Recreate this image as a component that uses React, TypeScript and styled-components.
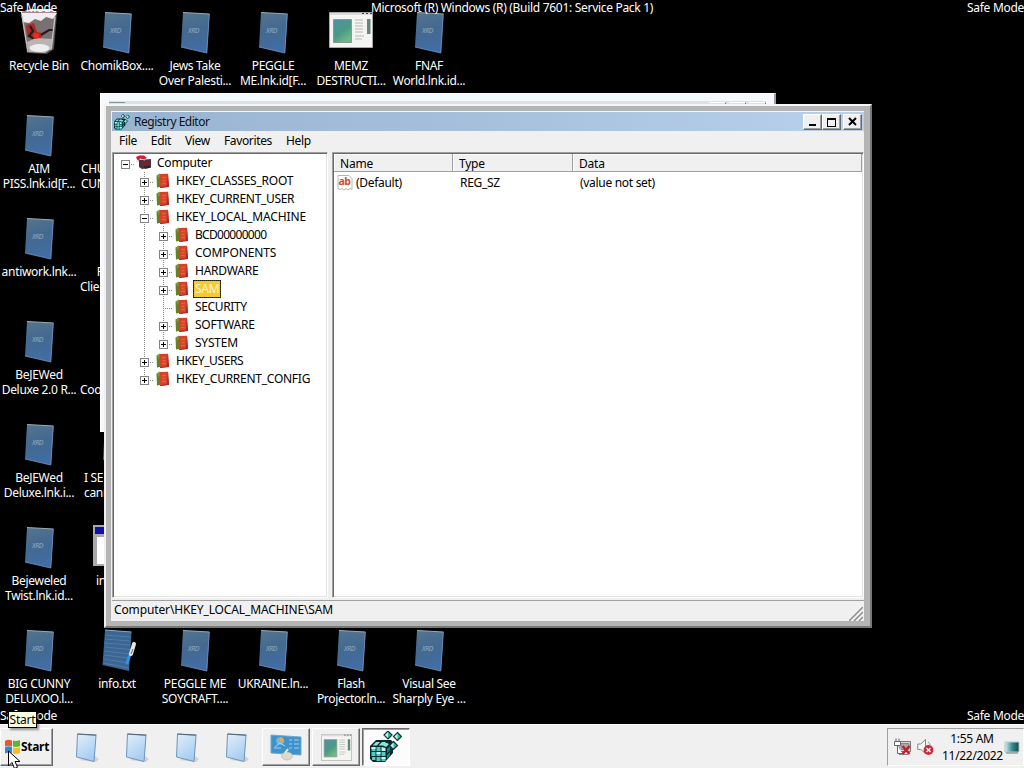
import React from 'react';
import styled, { createGlobalStyle, css } from 'styled-components';

const GlobalStyle = createGlobalStyle`
  * {
    box-sizing: border-box;
  }

  body {
    margin: 0;
    overflow: hidden;
    background: #000;
    font-family: "Noto Sans", "Open Sans", sans-serif;
    font-size: 12px;
    letter-spacing: -0.22px;
    color: #000;
    cursor: default;
  }

  svg {
    display: block;
    flex-shrink: 0;
  }
`;

const Screen = styled.div`
  position: relative;
  display: flex;
  flex-direction: column;
  width: 1024px;
  height: 768px;
  overflow: hidden;
`;

const Desktop = styled.main`
  flex: 1;
  min-height: 0;
  padding-top: 9px;
  background: #000;
`;

const IconGrid = styled.div`
  display: grid;
  grid-template-columns: repeat(6, 78px);
  grid-template-rows: repeat(7, 103px);
`;

const Shortcut = styled.div<{ col: number; row: number }>`
  grid-column: ${props => props.col};
  grid-row: ${props => props.row};
  display: flex;
  flex-direction: column;
  align-items: center;
  color: #fff;
`;

const IconBox = styled.div`
  display: flex;
  align-items: flex-start;
  justify-content: center;
  width: 48px;
  height: 48px;
`;

const ShortcutLabel = styled.div<{ indent?: number }>`
  width: 100%;
  margin-top: 1px;
  line-height: 15px;
  letter-spacing: -0.31px;
  text-align: center;
  white-space: pre;
  text-shadow: 0 1px 2px #000;
  ${props => props.indent !== undefined && css`
    padding-left: ${props.indent}px;
    text-align: left;
  `}
`;

const Watermark = styled.div<{ top: number }>`
  position: absolute;
  top: ${props => props.top}px;
  left: 0;
  display: flex;
  justify-content: space-between;
  width: 1024px;
  line-height: 16px;
  letter-spacing: -0.3px;
  color: #fff;
`;

const BackWindow = styled.div`
  position: absolute;
  top: 93px;
  left: 100px;
  width: 676px;
  height: 339px;
  padding: 7px 8px;
  background: #f5f8fc;
  border: 1px solid #fff;
  border-right: 2px solid #a0a0a0;
`;

const BackCaption = styled.div`
  display: flex;
  align-items: flex-start;
  justify-content: flex-end;
  gap: 3px;
  height: 14px;
  padding-top: 1px;
  background: #d9e2ea;
`;

const BackIcon = styled.i`
  width: 16px;
  height: 4px;
  margin-right: auto;
  border-top: 1px solid #8a949c;
`;

const BackButton = styled.i`
  width: 17px;
  height: 5px;
  border-top: 1px solid #fff;
  border-right: 1px solid #777;
`;

const Window = styled.section`
  position: absolute;
  top: 104px;
  left: 104px;
  display: flex;
  flex-direction: column;
  width: 768px;
  height: 524px;
  padding: 5px 6px 5px 5px;
  background: #b4b4b4;
  border: 2px solid;
  border-color: #f4f4f4 #777 #777 #f0f0f0;
`;

const Client = styled.div`
  flex: 1;
  min-height: 0;
  display: flex;
  flex-direction: column;
  padding: 0 0 0 1px;
  background: #f0f0f0;
  border-top: 1px solid #f4f6f8;
`;

const TitleBar = styled.header`
  display: flex;
  align-items: center;
  height: 19px;
  padding: 0 2px;
  background: linear-gradient(90deg, #99b4d1, #a5bedb 45%, #b9d1ea);
`;

const Title = styled.span`
  flex: 1;
  margin-left: 4px;
  line-height: 19px;
  letter-spacing: -0.48px;
  color: #111;
`;

const CaptionButton = styled.span<{ gap?: number }>`
  display: flex;
  align-items: center;
  justify-content: center;
  width: 19px;
  height: 16px;
  margin-left: ${props => props.gap || 0}px;
  background: #f0f0f0;
  border: 1px solid;
  border-color: #fff #696969 #696969 #fff;
  box-shadow: inset -1px -1px #a0a0a0;
`;

const MenuBar = styled.nav`
  display: flex;
  gap: 14px;
  height: 21px;
  padding-left: 7px;
  line-height: 20px;
  letter-spacing: -0.34px;
`;

const Panes = styled.div`
  display: flex;
  gap: 4px;
  height: 446px;
`;

const Pane = styled.div<{ width?: number }>`
  ${props => (props.width ? `width: ${props.width}px;` : 'flex: 1;')}
  background: #fff;
  border: 1px solid;
  border-color: #a0a0a0 #fff #fff #a0a0a0;
  box-shadow: inset 1px 1px #696969, inset -1px -1px #e3e3e3;
  padding: 1px;
`;

const TreeItem = styled.div`
  display: flex;
  align-items: center;
  height: 18px;
  padding-left: 2px;

  > svg {
    margin-left: 1px;
  }
`;

type Line = 'none' | 'full' | 'half';

const Guide = styled.span<{ line: Line; branch?: boolean }>`
  display: flex;
  align-items: center;
  width: 19px;
  height: 18px;
  padding: 2px 0 0 5px;
  background-image:
    repeating-linear-gradient(#888 0 1px, transparent 1px 2px),
    repeating-linear-gradient(90deg, #888 0 1px, transparent 1px 2px);
  background-repeat: no-repeat;
  background-position: 9px 0, 9px 10px;
  background-size:
    ${props => (props.line === 'none' ? '0 0' : props.line === 'half' ? '1px 10px' : '1px 18px')},
    ${props => (props.branch ? '10px 1px' : '0 0')};
`;

const NodeText = styled.span<{ selected?: boolean; spacing?: number }>`
  height: 18px;
  margin-left: 3px;
  padding: 0 2px;
  line-height: 17px;
  letter-spacing: ${props => props.spacing ?? -0.22}px;
  white-space: nowrap;
  ${props => props.selected && css`
    background: #f8c932;
    color: #fff6d0;
    outline: 1px dotted #221c00;
    outline-offset: -1px;
    box-shadow: inset 0 0 0 1px #43401f;
  `}
`;

const ListHeader = styled.div`
  display: flex;
  height: 18px;
  background: #f0f0f0;
  border-bottom: 1px solid #a0a0a0;
`;

const HeaderCell = styled.span<{ width?: number }>`
  ${props => (props.width ? `width: ${props.width}px;` : 'flex: 1;')}
  padding-left: 6px;
  line-height: 19px;
  border-right: 1px solid #a0a0a0;
  box-shadow: inset 1px 1px #fbfbfb;
`;

const ListRow = styled.div`
  display: grid;
  grid-template-columns: 120px 120px 1fr;
  align-items: center;
  height: 22px;
  line-height: 20px;
`;

const ListCell = styled.span<{ indent: number }>`
  display: flex;
  align-items: center;
  gap: 3px;
  padding-left: ${props => props.indent}px;
  letter-spacing: -0.3px;
`;

const StatusBar = styled.footer`
  display: flex;
  align-items: flex-end;
  justify-content: space-between;
  flex: 1;
  margin-top: 2px;
  padding: 0 1px 0 2px;
  border-top: 1px solid #a0a0a0;
  line-height: 21px;
  letter-spacing: -0.13px;

  span {
    align-self: flex-start;
    line-height: 18px;
  }
`;

const Taskbar = styled.footer`
  display: flex;
  height: 44px;
  padding-top: 3px;
  background: #f0f0f0;
  border-top: 1px solid #fff;
`;

const StartButton = styled.div`
  display: flex;
  align-items: center;
  width: 53px;
  height: 38px;
  padding: 0 0 1px 3px;
  font-weight: 700;
  letter-spacing: -0.3px;
  border: 1px solid;
  border-color: #fff #696969 #696969 #fff;
  box-shadow: inset -1px -1px #a0a0a0;
`;

const TaskList = styled.div`
  display: flex;
  flex: 1;
  padding-left: 8px;
`;

const TaskSlot = styled.div`
  display: flex;
  align-items: center;
  justify-content: center;
  width: 50px;
  height: 38px;
  padding: 2px 0 0 2px;
`;

const TaskButton = styled(TaskSlot)<{ active?: boolean }>`
  width: 48px;
  margin: 0 1px;
  padding: 0;
  border: 1px solid;
  border-color: #fff #696969 #696969 #fff;
  box-shadow: inset -1px -1px #a0a0a0;
  ${props => props.active && css`
    background: #fcfcfc;
    border-color: #696969 #fff #fff #696969;
    box-shadow: inset 1px 1px #a0a0a0;
  `}
`;

const Tray = styled.div`
  display: flex;
  align-items: center;
  gap: 5px;
  width: 137px;
  height: 38px;
  padding-left: 6px;
  border: 1px solid;
  border-color: #a0a0a0 #fff #fff #a0a0a0;
`;

const Clock = styled.div`
  width: 60px;
  margin-right: -3px;
  margin-left: 2px;
  line-height: 17px;
  letter-spacing: -0.3px;
  text-align: center;
  white-space: nowrap;
`;

const Tooltip = styled.div`
  position: absolute;
  top: 711px;
  left: 8px;
  width: 29px;
  height: 17px;
  background: #ffffe1;
  border: 1px solid #000;
  box-shadow: 2px 2px 2px rgba(0, 0, 0, 0.4);
  line-height: 15px;
  text-align: center;
`;

const Pointer = styled.svg`
  position: absolute;
  top: 750px;
  left: 8px;
`;

const BookIcon = () => (
  <svg width="48" height="48" viewBox="0 0 48 48">
    <defs>
      <linearGradient id="book" x1="0" y1="0" x2="0.2" y2="1">
        <stop offset="0" stopColor="#54758f" />
        <stop offset="0.5" stopColor="#44698f" />
        <stop offset="1" stopColor="#416da5" />
      </linearGradient>
    </defs>
    <path d="M12 3.500 38.500 5 36 44 10 38Z" fill="url(#book)" />
    <path d="M12 3.500 38.500 5" stroke="#9aabb5" fill="none" />
    <path d="M38.300 5 35.800 44 10 38" stroke="#7398c4" fill="none" strokeWidth="0.8" />
    <text x="17" y="24" fontSize="7" fontStyle="italic" fill="#8facc4" letterSpacing="-0.500">XRD</text>
  </svg>
);

const NoteIcon = () => (
  <svg width="48" height="48" viewBox="0 0 48 48">
    <path d="M12 3 38.500 5 36 44 9.500 38Z" fill="#3a6694" />
    <path d="M12 3 38.500 5" stroke="#8ca8c4" />
    <path
      d="M12 8l26 2M12 12l25.500 2M11.500 16l26 2M11.500 20l25.500 2.500M11 24l25.500 3M11 28l25 3M10.500 32l25.500 4M10 36l26 5"
      stroke="#587fa8"
      strokeWidth="0.8"
    />
    <path d="M39 22 33.500 37" stroke="#2d94e5" strokeWidth="3" />
    <path d="M41 17 38 27" stroke="#e7e5dc" strokeWidth="4" strokeLinecap="round" />
    <path d="M40 22 38 27" stroke="#596c7a" />
  </svg>
);

const RecycleIcon = () => (
  <svg width="48" height="48" viewBox="6 0 48 48">
    <path d="M12 3 48 4 45 40 38 45 18 44Z" fill="#53484a" />
    <path d="M12 3 47 4 44 39 37 44 19 43Z" fill="#7a7072" />
    <path d="M12 3 22 0 42 0 48 4 44 10 37 8 32 12 26 10 20 14 14 13Z" fill="#efedef" />
    <path d="M13 3h34" stroke="#aa8791" strokeWidth="1.800" />
    <path d="M17 16 25 14 28 23 34 24 31 31 24 30 18 26Z" fill="#b02a22" />
    <path d="M21 17l3 5-4 5 6 3M32 26l8-5 5 0" stroke="#231b1c" strokeWidth="2.200" fill="none" />
    <path d="M18 33 27 29 44 30 42 40 36 44 20 43Z" fill="#b9b5b4" />
    <ellipse cx="30.500" cy="39" rx="10" ry="4" fill="#eee" />
    <path d="M13 7 19 43M46 8 42 41" stroke="#c5bfc0" strokeWidth="1.300" />
    <circle cx="27" cy="27" r="3" fill="#e92c1e" />
  </svg>
);

const AppIcon = ({ width = 44, height = 36, top = 0 }: { width?: number; height?: number; top?: number }) => (
  <svg width={width} height={height + top} viewBox={`0 ${-top} 44 ${36 + top}`} preserveAspectRatio="none">
    <defs>
      <linearGradient id="app" x1="0" y1="0" x2="0.6" y2="1">
        <stop offset="0" stopColor="#4f8fa5" />
        <stop offset="0.6" stopColor="#4b9a88" />
        <stop offset="1" stopColor="#70b883" />
      </linearGradient>
    </defs>
    <path d="M.5.5h43v35H.5z" fill="#f4f4f2" stroke="#a8a8a8" />
    <path d="M1 2h42" stroke="#d8dcdc" strokeWidth="2" />
    <path d="M33 1.500h2m2 0h2m2 0h2" stroke="#444" />
    <path d="M4.500 7.500h18v23h-18z" fill="url(#app)" stroke="#8b9793" />
    <path d="M26 8h8m-8 3h8m-8 3h8m-8 3h8m-8 3h8m-8 4h9m-9 3h7" stroke="#b6b6b6" />
    <path d="M38 7h3.500v15H38z" fill="#67837b" />
  </svg>
);

const HtaIcon = () => (
  <svg width="48" height="48" viewBox="0 0 48 48">
    <path d="M0 1h48v41H0z" fill="#aaa" />
    <path d="M2 3h44v7H2z" fill="#0a12a8" />
    <path d="M4 13h41v27H4z" fill="#fff" />
  </svg>
);

const RegeditIcon = ({ size = 16 }: { size?: number }) => (
  <svg width={size} height={size} viewBox="0 0 32 32">
    <path d="M0 15 6 9h15l2 2v11l-8 9H3l-3-3Z" fill="#04282c" />
    <path d="M1.500 16h4v4h-4zM6.500 16h4v4h-4zM1.500 21h4v4h-4zM6.500 21h4v4h-4zM2 26h3.500v3H2zM6.500 26h4v4h-4zM11.500 21h4v4h-4zM11.500 26h4v4h-4z" fill="#4ccfc8" />
    <path d="M1.500 16h4v2h-4zM6.500 21h4v2h-4zM11.500 26h4v2h-4zM11.500 16l4 1v3l-4 0z" fill="#c8f4ee" />
    <path d="M2.500 14.500 6 11h4l-3 3.500zM8.500 14.500 12 11h4l-3 3.500zM12 14l3-3 4 2-3 3z" fill="#8be4db" />
    <path d="M17 18l3-3v4l-3 3zM17 24l3-3v3l-3 4zM21 14l1.500-2v5L21 18z" fill="#0c8a8c" />
    <g stroke="#06383a" strokeWidth="1.200">
      <path d="M18 0l4 4-4 4-4-4zM27.500 1.500l4 4-4 4-4-4zM23.500 10.500l4 4-4 4-4-4z" fill="#3fb3a4" />
    </g>
    <path d="M18 1v6l-3-3zM27.500 2.500v6l-3-3zM23.500 11.500v6l-3-3z" fill="#c4f0e6" />
  </svg>
);

const ComputerIcon = () => (
  <svg width="16" height="16" viewBox="0 0 16 16">
    <path d="M3 5 15 4v8.500L6 14 3 12Z" fill="#43363b" />
    <path d="M6 6.500 14 5.500v5L6.500 11.500Z" fill="#7c1f2d" />
    <path d="M8 11.500l5-1 2 2-6 1.500z" fill="#29262b" />
    <path d="M0 2 3 .5h5l3 2.500-4 2-3-1-2 3z" fill="#cf1f35" />
    <circle cx="1.500" cy="6" r="1.300" fill="#e7dedf" />
    <path d="M4 4l5 1" stroke="#f2e8e8" strokeWidth="0.900" />
  </svg>
);

const KeyIcon = () => (
  <svg width="16" height="16" viewBox="0 0 16 16">
    <path d="M1.500 2.500 5 .5v13.500L2 14.500z" fill="#668028" />
    <path d="M4.500 1 13 .8l1 13-9 1.200z" fill="#d5422a" />
    <path d="M13 1l1 13-9 1V14l7-.8z" fill="#a02c20" />
    <path d="M7 4.500h4M7.500 7.500h3M7 10.500h4" stroke="#e5603c" strokeWidth="1.500" />
    <path d="M2 2.500 5 1l-1 5z" fill="#8a9a37" />
  </svg>
);

const Toggle = ({ open }: { open: boolean }) => (
  <svg width="9" height="9" viewBox="0 0 9 9" shapeRendering="crispEdges">
    <path d="M.5.5h8v8h-8z" fill="#fff" stroke="#848484" />
    <path d={open ? 'M2 4.500h5' : 'M2 4.500h5M4.500 2v5'} stroke="#000" />
  </svg>
);

const StringIcon = () => (
  <svg width="16" height="16" viewBox="0 0 16 16">
    <path d="M1 .5h11l3 3v11l-2-1-2 1.500-2-1.500-2 1.500-2-1.500-2 1-2-1z" fill="#fff" stroke="#b4b4b4" />
    <text x="1.500" y="10" fontSize="10.500" fontWeight="700" fill="#cf4936" letterSpacing="-0.500">ab</text>
  </svg>
);

const FolderIcon = () => (
  <svg width="26" height="32" viewBox="0 0 26 32">
    <defs>
      <linearGradient id="folder" x1="0" y1="0" x2="0.500" y2="1">
        <stop offset="0" stopColor="#e1effb" />
        <stop offset="1" stopColor="#a8cdf0" />
      </linearGradient>
    </defs>
    <path d="M5 28l17 2 3-3-4-3z" fill="#d2d2d2" />
    <path d="M3.500 2 22 3.500 20 29.500 2.500 25z" fill="url(#folder)" stroke="#6d95bf" />
    <path d="M3.500 2 22.500 3" stroke="#526675" />
  </svg>
);

const ControlIcon = () => (
  <svg width="32" height="28" viewBox="0 0 32 28">
    <path d="M1 2 31 4v18l-30-2z" fill="#3f93cb" stroke="#75a7c8" />
    <path d="M19 7h3m2 0h5m-10 4h3m2 0h5m-10 4h3m2 0h5M4 15h7" stroke="#9bd3f0" strokeWidth="1.200" />
    <circle cx="10" cy="8" r="3.800" fill="#78b8df" />
    <path d="M10 8V4a4 4 0 0 1 3.500 6z" fill="#f2a24c" />
    <path d="M5 14l5-4 5 3" stroke="#a9d9f0" fill="none" />
    <ellipse cx="17" cy="23" rx="5.500" ry="4" fill="#ddd9cb" stroke="#aaa" strokeWidth="0.500" />
    <path d="M15 20l3-4" stroke="#e8e6dd" strokeWidth="2" />
  </svg>
);

const WindowsLogo = () => (
  <svg width="17" height="17" viewBox="0 0 17 17">
    <path d="M1 3q3-2 7-.5v6q-3.500-1.500-7 0z" fill="#e45a2c" />
    <path d="M9 2.500q3 1 7-.5v6q-3.500 1.500-7 .5z" fill="#65b233" />
    <path d="M1 9.500q3-2 7-.5v6q-3.500-1-7 .5z" fill="#3284d6" />
    <path d="M9 9.500q3 1 7-.5v6q-3.500 1.500-7 .5z" fill="#f5bc25" />
  </svg>
);

const NetworkIcon = () => (
  <svg width="18" height="18" viewBox="0 0 18 18">
    <path d="M5 3.500h11.500v10H5z" fill="#d8d8d8" stroke="#777" />
    <path d="M7 5.500h8v6H7zM5 16.500h9" fill="#aaa" stroke="#888" />
    <path d="M.5 3.500h6v4h-6zM2 .5v3m3-3v3M3.500 7.500v8H8" fill="#fff" stroke="#666" />
    <path d="M8.500 8l7 8m0-8-7 8" stroke="#c51e2b" strokeWidth="2.500" />
  </svg>
);

const VolumeIcon = () => (
  <svg width="18" height="18" viewBox="0 0 18 18">
    <path d="M.8 6h3L8.500 1.500v14L3.800 11.500h-3z" fill="#f7f7f7" stroke="#888" />
    <path d="M11 4q2 1 2 3" stroke="#999" fill="none" />
    <circle cx="11.500" cy="12" r="4.900" fill="#cf2937" />
    <path d="M9.500 10l4 4m0-4-4 4" stroke="#fff" strokeWidth="1.400" />
  </svg>
);

const PeekIcon = () => (
  <svg width="16" height="16" viewBox="0 0 16 16">
    <defs>
      <linearGradient id="peek">
        <stop offset="0" stopColor="#d2f2f0" />
        <stop offset="0.500" stopColor="#398e90" />
        <stop offset="1" stopColor="#13494d" />
      </linearGradient>
    </defs>
    <path d="M1 3h14v10H1z" fill="url(#peek)" stroke="#b8c7ca" />
    <path d="M2 14h12" stroke="#617d82" />
  </svg>
);

interface ShortcutData {
  col: number;
  row: number;
  text: string;
  icon?: React.ReactNode;
  indent?: number;
}

const book = <BookIcon />;

const shortcuts: ShortcutData[] = [
  { col: 1, row: 1, text: 'Recycle Bin', icon: <RecycleIcon /> },
  { col: 2, row: 1, text: 'ChomikBox....', icon: book },
  { col: 3, row: 1, text: 'Jews Take\nOver Palesti...', icon: book },
  { col: 4, row: 1, text: 'PEGGLE\nME.lnk.id[F...', icon: book },
  { col: 5, row: 1, text: 'MEMZ\nDESTRUCTI...', icon: <AppIcon top={3} /> },
  { col: 6, row: 1, text: 'FNAF\nWorld.lnk.id...', icon: book },
  { col: 1, row: 2, text: 'AIM\nPISS.lnk.id[F...', icon: book },
  { col: 2, row: 2, text: 'CHU\nCUN', icon: book, indent: 3 },
  { col: 1, row: 3, text: 'antiwork.lnk...', icon: book },
  { col: 2, row: 3, text: '      F\nClie', icon: book, indent: 2 },
  { col: 1, row: 4, text: 'BeJEWed\nDeluxe 2.0 R...', icon: book },
  { col: 2, row: 4, text: ' \nCoo', icon: book, indent: 2 },
  { col: 1, row: 5, text: 'BeJEWed\nDeluxe.lnk.i...', icon: book },
  { col: 2, row: 5, text: 'I SE\ncann', icon: book, indent: 6 },
  { col: 1, row: 6, text: 'Bejeweled\nTwist.lnk.id...', icon: book },
  { col: 2, row: 6, text: 'in', icon: <HtaIcon />, indent: 18 },
  { col: 1, row: 7, text: 'BIG CUNNY\nDELUXOO.l...', icon: book },
  { col: 2, row: 7, text: 'info.txt', icon: <NoteIcon /> },
  { col: 3, row: 7, text: 'PEGGLE ME\nSOYCRAFT....', icon: book },
  { col: 4, row: 7, text: 'UKRAINE.ln...', icon: book },
  { col: 5, row: 7, text: 'Flash\nProjector.ln...', icon: book },
  { col: 6, row: 7, text: 'Visual See\nSharply Eye ...', icon: book },
];

interface TreeNode {
  name: string;
  lines: Line[];
  open?: boolean;
  leaf?: boolean;
  selected?: boolean;
  spacing?: number;
}

// one entry in `lines` per indent level, the last one holds the toggle
const tree: TreeNode[] = [
  { name: 'Computer', lines: ['none'], open: true },
  { name: 'HKEY_CLASSES_ROOT', lines: ['none', 'full'] },
  { name: 'HKEY_CURRENT_USER', lines: ['none', 'full'], spacing: -0.32 },
  { name: 'HKEY_LOCAL_MACHINE', lines: ['none', 'full'], open: true, spacing: -0.11 },
  { name: 'BCD00000000', lines: ['none', 'full', 'full'], spacing: -0.7 },
  { name: 'COMPONENTS', lines: ['none', 'full', 'full'], spacing: -0.11 },
  { name: 'HARDWARE', lines: ['none', 'full', 'full'] },
  { name: 'SAM', lines: ['none', 'full', 'full'], selected: true },
  { name: 'SECURITY', lines: ['none', 'full', 'full'], leaf: true, spacing: -0.35 },
  { name: 'SOFTWARE', lines: ['none', 'full', 'full'] },
  { name: 'SYSTEM', lines: ['none', 'full', 'half'] },
  { name: 'HKEY_USERS', lines: ['none', 'full'], spacing: -0.4 },
  { name: 'HKEY_CURRENT_CONFIG', lines: ['none', 'half'], spacing: -0.26 },
];

const TreeRow = ({ node }: { node: TreeNode }) => {
  const last = node.lines.length - 1;
  return (
    <TreeItem>
      {node.lines.map((line, i) => (
        <Guide key={i} line={line} branch={i === last}>
          {i === last && !node.leaf && <Toggle open={!!node.open} />}
        </Guide>
      ))}
      {last === 0 ? <ComputerIcon /> : <KeyIcon />}
      <NodeText selected={node.selected} spacing={node.spacing}>{node.name}</NodeText>
    </TreeItem>
  );
};

const RegistryEditor = () => (
  <Window>
    <Client>
      <TitleBar>
        <RegeditIcon />
        <Title>Registry Editor</Title>
        <CaptionButton>
          <svg width="11" height="9"><path d="M2 7h7v2H2z" /></svg>
        </CaptionButton>
        <CaptionButton>
          <svg width="11" height="10" shapeRendering="crispEdges">
            <path d="M1.500 1h8v8h-8z" fill="none" stroke="#000" />
            <path d="M1 1h9v2H1z" />
          </svg>
        </CaptionButton>
        <CaptionButton gap={2}>
          <svg width="10" height="9"><path d="M1 1l7 7M8 1 1 8" stroke="#000" strokeWidth="2" /></svg>
        </CaptionButton>
      </TitleBar>
      <MenuBar>
        <span>File</span>
        <span>Edit</span>
        <span>View</span>
        <span>Favorites</span>
        <span>Help</span>
      </MenuBar>
      <Panes>
        <Pane width={216}>
          {tree.map(node => <TreeRow key={node.name} node={node} />)}
        </Pane>
        <Pane>
          <ListHeader>
            <HeaderCell width={119}>Name</HeaderCell>
            <HeaderCell width={120}>Type</HeaderCell>
            <HeaderCell>Data</HeaderCell>
          </ListHeader>
          <ListRow>
            <ListCell indent={3}><StringIcon />(Default)</ListCell>
            <ListCell indent={6}>REG_SZ</ListCell>
            <ListCell indent={6}>(value not set)</ListCell>
          </ListRow>
        </Pane>
      </Panes>
      <StatusBar>
        <span>Computer\HKEY_LOCAL_MACHINE\SAM</span>
        <svg width="14" height="14">
          <path d="M0 14 14 0M5 14l9-9M10 14l4-4" stroke="#8c8c8c" strokeWidth="1.500" />
        </svg>
      </StatusBar>
    </Client>
  </Window>
);

const App = () => (
  <>
    <GlobalStyle />
    <Screen>
      <Desktop>
        <IconGrid>
          {shortcuts.map(item => (
            <Shortcut key={`${item.col}-${item.row}`} col={item.col} row={item.row}>
              <IconBox>{item.icon}</IconBox>
              <ShortcutLabel indent={item.indent}>{item.text}</ShortcutLabel>
            </Shortcut>
          ))}
        </IconGrid>
      </Desktop>
      <Watermark top={0}>
        <span>Safe Mode</span>
        <span>Microsoft (R) Windows (R) (Build 7601: Service Pack 1)</span>
        <span>Safe Mode</span>
      </Watermark>
      <Watermark top={708}>
        <span>Safe Mode</span>
        <span>Safe Mode</span>
      </Watermark>
      <BackWindow>
        <BackCaption>
          <BackIcon />
          <BackButton />
          <BackButton />
          <BackButton />
        </BackCaption>
      </BackWindow>
      <RegistryEditor />
      <Taskbar>
        <StartButton><WindowsLogo />Start</StartButton>
        <TaskList>
          <TaskSlot><FolderIcon /></TaskSlot>
          <TaskSlot><FolderIcon /></TaskSlot>
          <TaskSlot><FolderIcon /></TaskSlot>
          <TaskSlot><FolderIcon /></TaskSlot>
          <TaskButton><ControlIcon /></TaskButton>
          <TaskButton><AppIcon width={31} height={27} /></TaskButton>
          <TaskButton active><RegeditIcon size={32} /></TaskButton>
        </TaskList>
        <Tray>
          <NetworkIcon />
          <VolumeIcon />
          <Clock>1:55 AM<br />11/22/2022</Clock>
          <PeekIcon />
        </Tray>
      </Taskbar>
      <Tooltip>Start</Tooltip>
      <Pointer width="13" height="20" viewBox="0 0 13 20">
        <path d="M.5 1v15l3.500-3.500 2.500 6 3-1.300-2.500-5.700h5z" fill="#fff" stroke="#000" />
      </Pointer>
    </Screen>
  </>
);

export default App;
